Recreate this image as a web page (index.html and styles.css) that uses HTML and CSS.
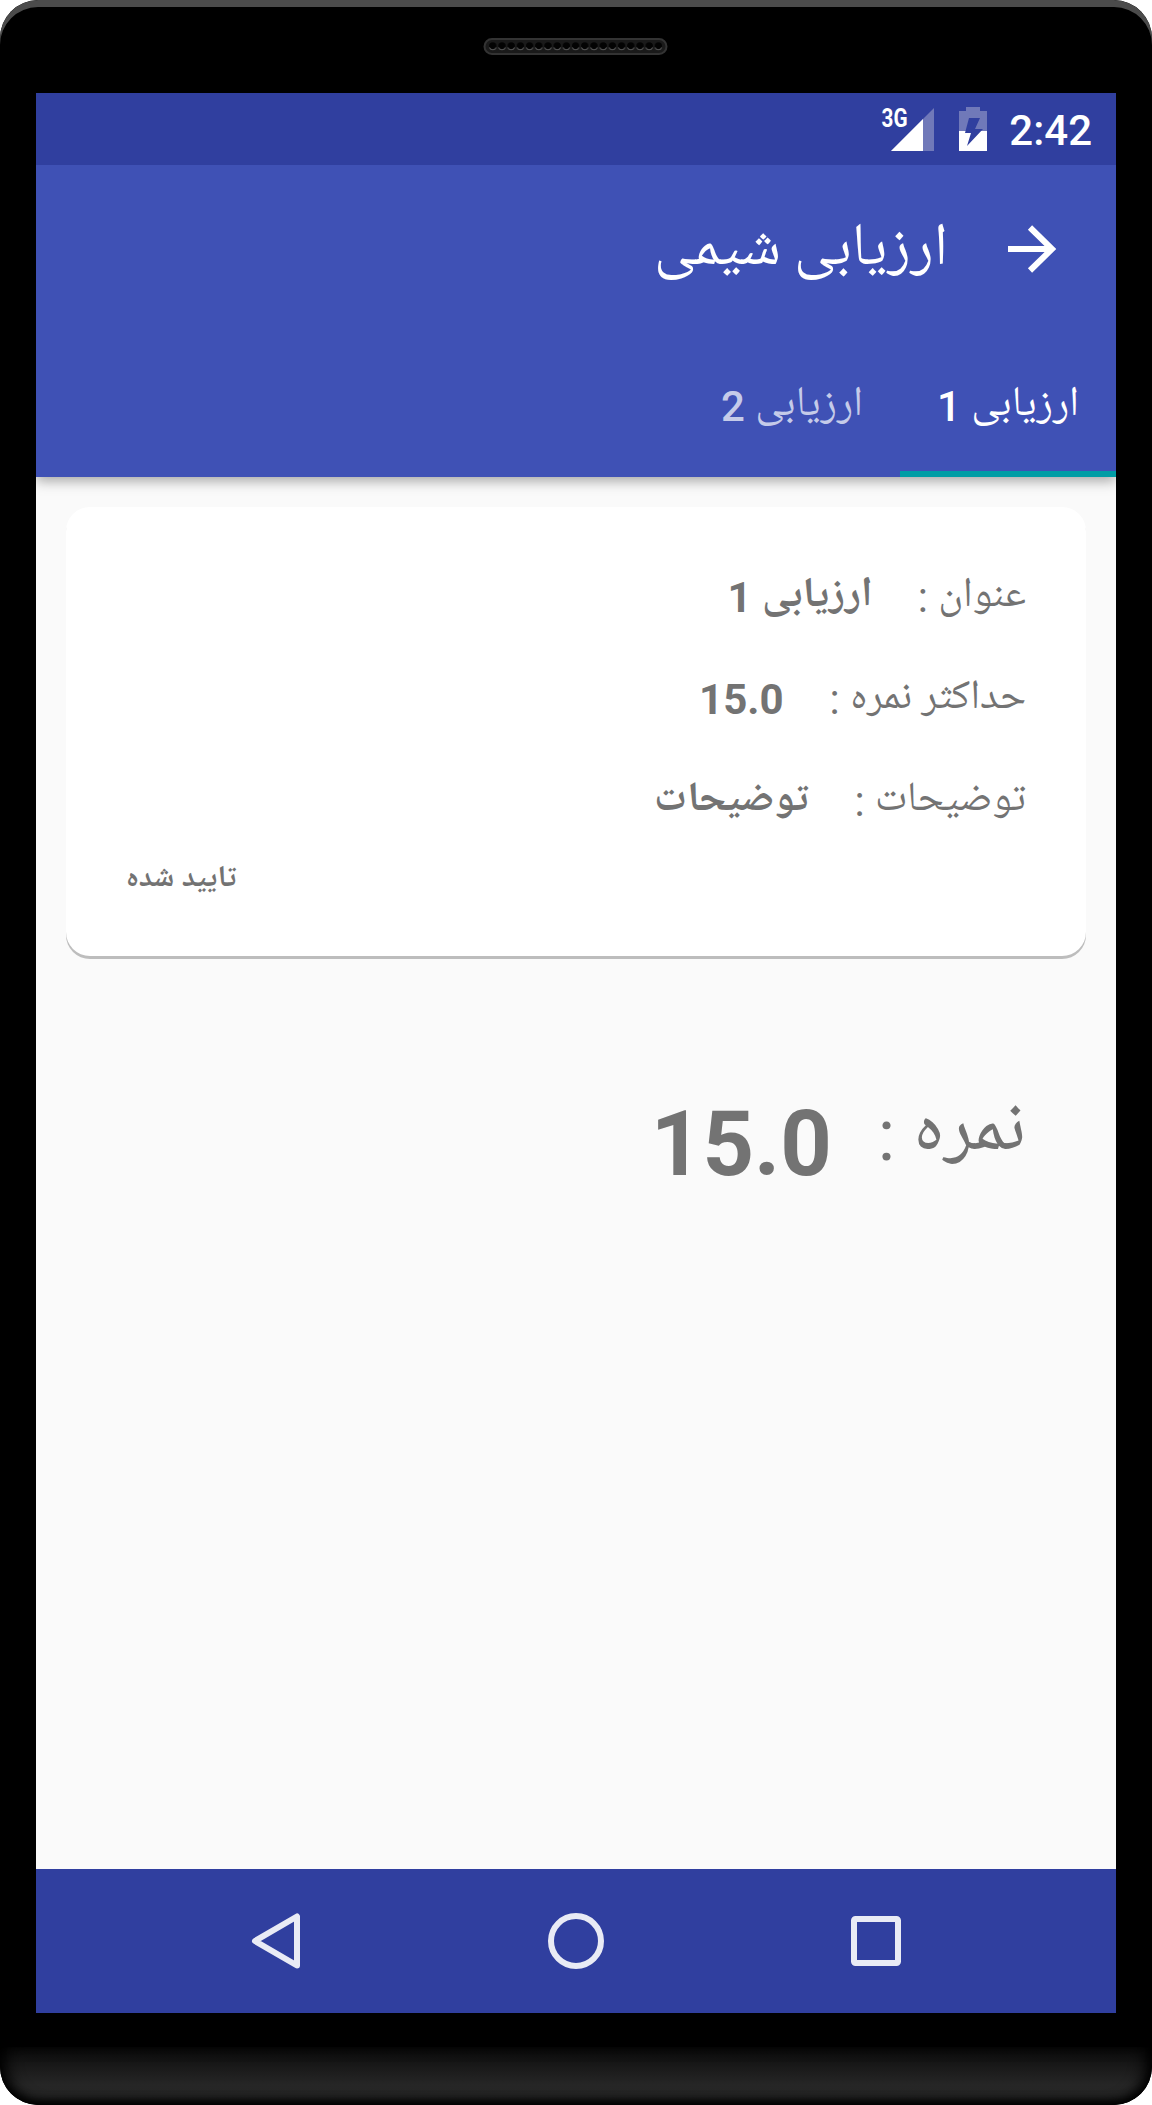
FILE: index.html
```html
<!DOCTYPE html>
<html lang="fa">
<head>
<meta charset="utf-8">
<title>ارزیابی شیمی</title>
<link rel="stylesheet" href="styles.css">
</head>
<body>
<div class="phone">
  <div class="bezel-top">
    <svg class="speaker" width="188" height="20" viewBox="0 0 188 20">
      <defs>
        <pattern id="holes" x="6.2" y="0" width="9.2" height="20" patternUnits="userSpaceOnUse">
          <circle cx="4.6" cy="10" r="3.7" fill="#030303"/>
          <path d="M1.2 11.5a3.7 3.7 0 0 0 6.8 0" fill="none" stroke="#555" stroke-width="1"/>
        </pattern>
      </defs>
      <rect x="2.500" y="3" width="182" height="15" rx="7.500" fill="#1a1a1a" stroke="#333" stroke-width="2"/>
      <rect x="6.2" y="0" width="174.8" height="20" fill="url(#holes)"/>
    </svg>
  </div>
  <main class="screen">
    <header class="status">
      <svg width="54" height="50" viewBox="0 0 54 50">
        <path d="M54 4V47H11Z" fill="#7079b9"/>
        <path d="M43 15V47H11Z" fill="#fff"/>
        <text class="network" x="1.5" y="23" textLength="26" lengthAdjust="spacingAndGlyphs">3G</text>
      </svg>
      <svg class="battery" width="30" height="46" viewBox="0 0 30 46">
        <path d="M8 1H22V5H29V25H1V5H8Z" fill="#7079b9"/>
        <path d="M1 25H29V45H1Z" fill="#fff"/>
        <path d="M11 12H22L17 23H25L9 40L13 27H7Z" fill="#303f9f"/>
      </svg>
      <span class="time">2:42</span>
    </header>
    <div class="appbar">
      <div class="toolbar" dir="rtl">
        <svg width="50" height="50" viewBox="0 0 50 50">
          <path d="M1 25H44M23 3.500L45 25L23 46.500" fill="none" stroke="#fff" stroke-width="6"/>
        </svg>
        <h1 class="title">ارزیابی شیمی</h1>
      </div>
      <nav class="tabs" dir="rtl">
        <div class="tab tab-active"><span class="fa">ارزیابی</span> 1</div>
        <div class="tab"><span class="fa">ارزیابی</span> 2</div>
      </nav>
    </div>
    <section class="content">
      <div class="card" dir="rtl">
        <div class="row row-title"><span><span class="fa">عنوان</span> :</span><b><span class="fa">ارزیابی</span> 1</b></div>
        <div class="row"><span><span class="fa">حداکثر نمره</span> :</span><b>15.0</b></div>
        <div class="row"><span><span class="fa">توضیحات</span> :</span><b><span class="fa">توضیحات</span></b></div>
        <div class="state">تایید شده</div>
      </div>
      <div class="score" dir="rtl">
        <span class="score-label"><span class="fa">نمره</span> :</span><b class="score-value">15.0</b>
      </div>
    </section>
    <footer class="navbar">
      <svg width="60" height="66" viewBox="0 0 60 66"><path d="M51 8.500V57.500L9 33Z" fill="none" stroke="#e9ebf5" stroke-width="6" stroke-linejoin="round"/></svg>
      <svg width="60" height="66" viewBox="0 0 60 66"><circle cx="30" cy="33" r="25" fill="none" stroke="#e9ebf5" stroke-width="6"/></svg>
      <svg width="60" height="66" viewBox="0 0 60 66"><rect x="8" y="11" width="44" height="44" rx="1.500" fill="none" stroke="#e9ebf5" stroke-width="6"/></svg>
    </footer>
  </main>
  <div class="chin"></div>
</div>
</body>
</html>
```
FILE: styles.css
```css
* { box-sizing: border-box; }
body {
  margin: 0;
  background: #fff;
  font-family: Roboto, "Noto Naskh Arabic", "DejaVu Sans", sans-serif;
}
svg { display: block; flex: none; }
.phone {
  display: flex;
  flex-direction: column;
  width: 1152px;
  height: 2105px;
  border-radius: 38px;
  background: #000;
  overflow: hidden;
}
.bezel-top {
  display: flex;
  justify-content: center;
  height: 93px;
  padding-top: 36px;
  border-radius: 38px 38px 0 0;
  box-shadow: inset 0 7px 0 #4b4b4b;
}
.screen {
  display: flex;
  flex-direction: column;
  width: 1080px;
  height: 1920px;
  margin: 0 36px;
  background: #fafafa;
  overflow: hidden;
}
.status {
  display: flex;
  justify-content: flex-end;
  align-items: center;
  height: 72px;
  padding-right: 24px;
  background: #303f9f;
  color: #fff;
}
.network { fill: #fff; font: 700 25px Roboto, sans-serif; }
.battery { margin: 0 21px 0 24px; }
.time { padding-top: 3px; font-size: 42px; font-weight: 500; line-height: 72px; }
.appbar {
  height: 312px;
  background: #3f51b5;
  color: #fff;
  box-shadow: 0 4px 12px rgba(0, 0, 0, .34);
  clip-path: inset(0 0 -24px 0);
}
.toolbar {
  display: flex;
  align-items: center;
  gap: 59px;
  height: 168px;
  padding-right: 59px;
}
.title {
  margin: 0;
  padding-bottom: 11px;
  font-size: 60px;
  font-weight: 400;
  line-height: 140px;
  word-spacing: -2px;
}
.tabs { display: flex; height: 144px; }
.tab {
  width: 216px;
  padding-top: 4px;
  font-size: 42px;
  font-weight: 500;
  line-height: 140px;
  text-align: center;
  color: #c5cbe9;
}
.tab .fa { font-size: 42px; font-weight: 400; }
.tab-active { border-bottom: 6px solid #009da5; color: #fff; }
.fa { font-size: .985em; line-height: 0; vertical-align: 6px; word-spacing: -1px; }
.content { flex: 1; padding: 30px; }
.card {
  height: 449px;
  padding: 40px 60px 0;
  border-radius: 24px;
  background: #fff;
  box-shadow: 0 3px 0 #bdbdbd;
  color: #737373;
}
.row {
  display: flex;
  gap: 46px;
  height: 102px;
  font-size: 42px;
  line-height: 102px;
}
.row-title { gap: 45px; }
.row-title .fa { font-size: 42px; }
.state {
  font-size: 30px;
  font-weight: 700;
  line-height: 46px;
  text-align: left;
}
.score {
  display: flex;
  align-items: flex-start;
  gap: 46px;
  padding: 120px 60px 0;
  line-height: 120px;
  color: #737373;
}
.score-label { font-size: 72px; }
.score-label .fa { font-size: 1.045em; vertical-align: 11px; }
.score-value { margin-top: 9px; font-size: 90px; }
.navbar {
  display: flex;
  justify-content: space-between;
  align-items: center;
  height: 144px;
  padding: 0 210px;
  background: #303f9f;
}
.chin {
  height: 58px;
  margin-top: 34px;
  border-radius: 0 0 38px 38px;
  background: linear-gradient(#0b0b0b, #262626 65%, #242424);
  box-shadow: inset 0 -7px 9px -3px #000, inset 10px 0 16px -4px #000, inset -10px 0 16px -4px #000;
}
```
